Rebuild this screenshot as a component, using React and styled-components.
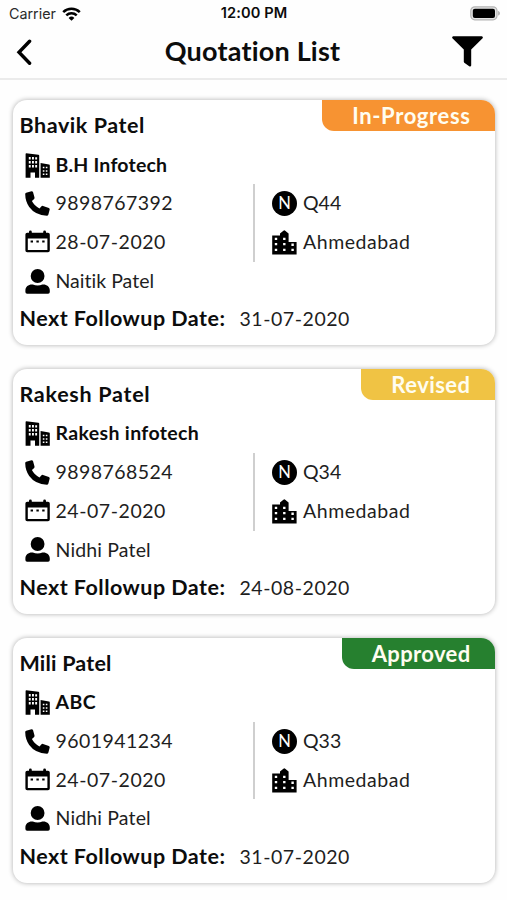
import React from "react"
import styled, { createGlobalStyle } from "styled-components"

const GlobalStyle = createGlobalStyle`
  * {
    box-sizing: border-box;
  }

  body {
    margin: 0;
    background: #fefefe;
    color: #0c0c0c;
    font-family: Lato, "Liberation Sans", sans-serif;
    font-variant-ligatures: none;
  }
`

const Screen = styled.div`
  width: 507px;
  height: 900px;
  overflow: hidden;
`

const StatusBar = styled.div`
  display: grid;
  grid-template-columns: 1fr auto 1fr;
  align-items: center;
  height: 27px;
  padding: 0 7px 0 9px;
  font-family: Inter, sans-serif;
  font-size: 14.3px;
  line-height: 27px;
`

const Carrier = styled.div`
  display: flex;
  align-items: center;
  gap: 6px;
  color: #2a2a2a;
`

const Clock = styled.div`
  padding-right: 1px;
  font-weight: 600;
  font-size: 14.6px;
  letter-spacing: 0.1px;
`

const BatterySlot = styled.div`
  display: flex;
  justify-content: flex-end;
`

const Header = styled.header`
  display: grid;
  grid-template-columns: 60px 1fr 60px;
  align-items: center;
  height: 53px;
  padding: 0 8px 3px 7px;
  border-bottom: 2px solid #ebebeb;
`

const IconButton = styled.button`
  display: flex;
  justify-content: ${({ $end }) => ($end ? `flex-end` : `flex-start`)};
  padding: ${({ $end }) => ($end ? `1px 16px 0 0` : `3px 0 0 9px`)};
  border: 0;
  background: none;
  color: #000;
`

const Title = styled.h1`
  margin: 0;
  padding-right: 1px;
  font-size: 27px;
  font-weight: 700;
  line-height: 38px;
  text-align: center;
  letter-spacing: 0.2px;
`

const List = styled.main`
  display: flex;
  flex-direction: column;
  gap: 23.8px;
  padding: 20px 12px 0 13px;
`

const Card = styled.article`
  position: relative;
  height: 245px;
  padding: 7px 7px 6px 6.5px;
  border-radius: 14px;
  background: #fff;
  box-shadow: 0 0 5px rgba(0, 0, 0, 0.32);
`

const Badge = styled.div`
  position: absolute;
  top: 0;
  right: 0;
  height: 31px;
  padding: 0 24.5px 0 30px;
  border-radius: 0 14px 0 12px;
  background: ${({ $color }) => $color};
  color: #fffdf0;
  font-size: 22px;
  font-weight: 700;
  line-height: 32px;
  letter-spacing: ${({ $track }) => $track}px;
`

const Name = styled.h2`
  margin: 0;
  height: 38.7px;
  font-size: 21.5px;
  font-weight: 700;
  line-height: 37.5px;
  letter-spacing: ${({ $track }) => $track}px;
`

const Row = styled.div`
  display: flex;
  align-items: center;
  gap: 6px;
  height: 38.7px;
  padding-left: 5px;
`

const Columns = styled.div`
  display: grid;
  grid-template-columns: 233px 1fr;
`

const RightColumn = styled.div`
  padding-left: 12.5px;
  border-left: 2px solid #cfcfcf;
`

const Text = styled.span`
  color: #1e1e1e;
  font-size: 19.5px;
  line-height: 38.7px;
  white-space: nowrap;
  letter-spacing: ${({ $track }) => $track || 0}px;
`

const Company = styled(Text)`
  height: 38.7px;
  color: #0c0c0c;
  font-weight: 700;
  line-height: 38px;
`

const Followup = styled.div`
  display: flex;
  align-items: center;
  height: 38.7px;
`

const FollowupLabel = styled.span`
  width: 220px;
  height: 38.7px;
  font-size: 21.5px;
  font-weight: 700;
  line-height: 37.5px;
  white-space: nowrap;
  letter-spacing: 0.47px;
`

const WifiIcon = () => (
  <svg width="19" height="14" viewBox="0 0 19 14" fill="none" stroke="#000" strokeWidth="2.5">
    <path d="M1.2 5.2a11.8 11.8 0 0 1 16.6 0" />
    <path d="M4.3 8.4a7.4 7.4 0 0 1 10.4 0" />
    <path d="M9.5 13.8 6.6 10.9a4.1 4.1 0 0 1 5.8 0z" fill="#000" stroke="none" />
  </svg>
)

const BatteryIcon = () => (
  <svg width="30" height="15" viewBox="0 0 30 15">
    <rect x="0.8" y="0.8" width="26.2" height="13" rx="4" fill="#e6e6e6" stroke="#b4b4b4" strokeWidth="1.2" />
    <rect x="2.8" y="2.8" width="22.2" height="9.2" rx="2" fill="#000" />
    <path d="M28.2 5v4.6c2.2-.7 2.2-3.9 0-4.6z" fill="#aaa" />
  </svg>
)

const BackIcon = () => (
  <svg width="17" height="27" viewBox="0 0 17 27" fill="none" stroke="#000" strokeWidth="3.4">
    <path d="M13.6 2.2 3 13.2l10.600 11" strokeLinecap="round" />
  </svg>
)

const FilterIcon = () => (
  <svg width="31" height="31" viewBox="0 0 31 31">
    <path d="M1.200.3H29.800q1.600.4.800 1.900L19.200 13.600V29.400q-.4 1.600-2 .8L12.300 26.800q-.5-.4-.5-1V13.600L.4 2.200Q-.4.7 1.200.3z" />
  </svg>
)

const BuildingIcon = () => (
  <svg width="25" height="25" viewBox="0 0 25 25">
    <path fillRule="evenodd" d="M1.200.2 13.400 1.700q.8.1.8.9V24.800H10V19.500H5.500V24.800H.6V.8zM3.800 4v2.400h1.900V4zM7 4v2.400h1.900V4zM10.200 4.200v2.400h1.900V4.200zM3.800 8v2.400h1.900V8zM7 8v2.400h1.900V8zM10.200 8v2.400h1.900V8zM3.800 12v2.400h1.900V12zM7 12v2.400h1.900V12zM10.200 12v2.400h1.900V12z" />
    <path fillRule="evenodd" d="M15.600 10 24 11.600q.8.2.8 1V24.800H15.600zM17.800 13.800v1.500h1.600v-1.500zM20.800 13.800v1.500h1.600v-1.500zM17.800 17.200v1.500h1.600v-1.500zM20.800 17.200v1.500h1.600v-1.500zM17.800 20.600v1.500h1.600v-1.500zM20.800 20.600v1.500h1.600v-1.500z" />
  </svg>
)

const PhoneIcon = () => (
  <svg width="25" height="25" viewBox="0 0 25 25">
    <path d="M1.200 1.700 6.500.2q1.100-.1 1.500.9L9.500 6.600q.2 1-.6 1.700L6.900 10.100Q9.500 15.200 14.500 17.400L16.300 15.400q.7-.8 1.700-.5L23.900 17q1 .5.800 1.500L23.400 23.500q-.4 1.200-1.600 1.200Q10.400 24.400 4.200 16 .3 10.400.2 3 .2 2 1.200 1.700z" />
  </svg>
)

const CalendarIcon = () => (
  <svg width="25" height="25" viewBox="0 0 25 25">
    <path fillRule="evenodd" d="M4 2.800V2a1.400 1.400 0 0 1 2.800 0V2.800h11.400V2a1.400 1.400 0 0 1 2.800 0V2.800H23a1.800 1.800 0 0 1 1.800 1.800V20.400A1.800 1.800 0 0 1 23 22.200H2.200A1.800 1.800 0 0 1 .4 20.400V4.600A1.800 1.800 0 0 1 2.200 2.800zM2.800 8.600V19.900h19.600V8.600z" />
    <path d="M5.600 10.600h2.400v2H5.600zM11.400 10.600h2.400v2h-2.400zM17.200 10.600h2.400v2h-2.400z" />
  </svg>
)

const PersonIcon = () => (
  <svg width="25" height="25" viewBox="0 0 25 25">
    <circle cx="12.600" cy="7" r="6.900" />
    <path d="M.4 23v-1.600c0-3.600 3-5.800 6.400-5.800h1c3 1.300 6.600 1.300 9.600 0h1c3.400 0 6.400 2.200 6.400 5.800V23q0 1.700-1.700 1.700H2.100Q.4 24.700.4 23z" />
  </svg>
)

const CityIcon = () => (
  <svg width="25" height="25" viewBox="0 0 25 25">
    <path fillRule="evenodd" d="M.2 5.400H8V3.600L11.400.7Q12.300 0 13.200.7L16.600 3.600V12h8v12.400H.2zM2.800 7.800v2.300h2.400V7.800zM2.800 13v2.300h2.400V13zM2.800 18.800v2.300h2.400v-2.300zM11.100 7.800v2.300h2.400V7.800zM11.100 13v2.300h2.400V13zM11.100 18.800v2.300h2.400v-2.300zM19.400 13.600v2.300h2.400v-2.300zM19.400 18.800v2.300h2.400v-2.300z" />
  </svg>
)

const NumberDot = styled.span`
  width: 25px;
  height: 25px;
  border-radius: 50%;
  background: #000;
  color: #fff;
  font-size: 16.5px;
  line-height: 24px;
  text-align: center;
`

const quotations = [
  {
    name: `Bhavik Patel`,
    nameTrack: 0.55,
    company: `B.H Infotech`,
    companyTrack: 0.2,
    phone: `9898767392`,
    date: `28-07-2020`,
    person: `Naitik Patel`,
    personTrack: 0.02,
    number: `Q44`,
    city: `Ahmedabad`,
    followup: `31-07-2020`,
    status: `In-Progress`,
    statusTrack: 0.62,
    color: `#f79332`,
  },
  {
    name: `Rakesh Patel`,
    nameTrack: 0.72,
    company: `Rakesh infotech`,
    companyTrack: 0.35,
    phone: `9898768524`,
    date: `24-07-2020`,
    person: `Nidhi Patel`,
    personTrack: 0.15,
    number: `Q34`,
    city: `Ahmedabad`,
    followup: `24-08-2020`,
    status: `Revised`,
    statusTrack: 0.45,
    color: `#f0c344`,
  },
  {
    name: `Mili Patel`,
    nameTrack: 0.2,
    company: `ABC`,
    companyTrack: 0.4,
    phone: `9601941234`,
    date: `24-07-2020`,
    person: `Nidhi Patel`,
    personTrack: 0.15,
    number: `Q33`,
    city: `Ahmedabad`,
    followup: `31-07-2020`,
    status: `Approved`,
    statusTrack: 0.35,
    color: `#26802f`,
  },
]

const QuotationCard = ({ item }) => (
  <Card>
    <Badge $color={item.color} $track={item.statusTrack}>{item.status}</Badge>
    <Name $track={item.nameTrack}>{item.name}</Name>
    <Row>
      <BuildingIcon />
      <Company $track={item.companyTrack}>{item.company}</Company>
    </Row>
    <Columns>
      <div>
        <Row>
          <PhoneIcon />
          <Text $track={0.45}>{item.phone}</Text>
        </Row>
        <Row>
          <CalendarIcon />
          <Text $track={0.55}>{item.date}</Text>
        </Row>
      </div>
      <RightColumn>
        <Row>
          <NumberDot>N</NumberDot>
          <Text>{item.number}</Text>
        </Row>
        <Row>
          <CityIcon />
          <Text $track={0.55}>{item.city}</Text>
        </Row>
      </RightColumn>
    </Columns>
    <Row>
      <PersonIcon />
      <Text $track={item.personTrack}>{item.person}</Text>
    </Row>
    <Followup>
      <FollowupLabel>Next Followup Date:</FollowupLabel>
      <Text $track={0.55}>{item.followup}</Text>
    </Followup>
  </Card>
)

export default function App() {
  return (
    <Screen>
      <GlobalStyle />
      <StatusBar>
        <Carrier>
          Carrier
          <WifiIcon />
        </Carrier>
        <Clock>12:00 PM</Clock>
        <BatterySlot>
          <BatteryIcon />
        </BatterySlot>
      </StatusBar>
      <Header>
        <IconButton aria-label="Back">
          <BackIcon />
        </IconButton>
        <Title>Quotation List</Title>
        <IconButton $end aria-label="Filter">
          <FilterIcon />
        </IconButton>
      </Header>
      <List>
        {quotations.map((item) => (
          <QuotationCard key={item.phone} item={item} />
        ))}
      </List>
    </Screen>
  )
}
